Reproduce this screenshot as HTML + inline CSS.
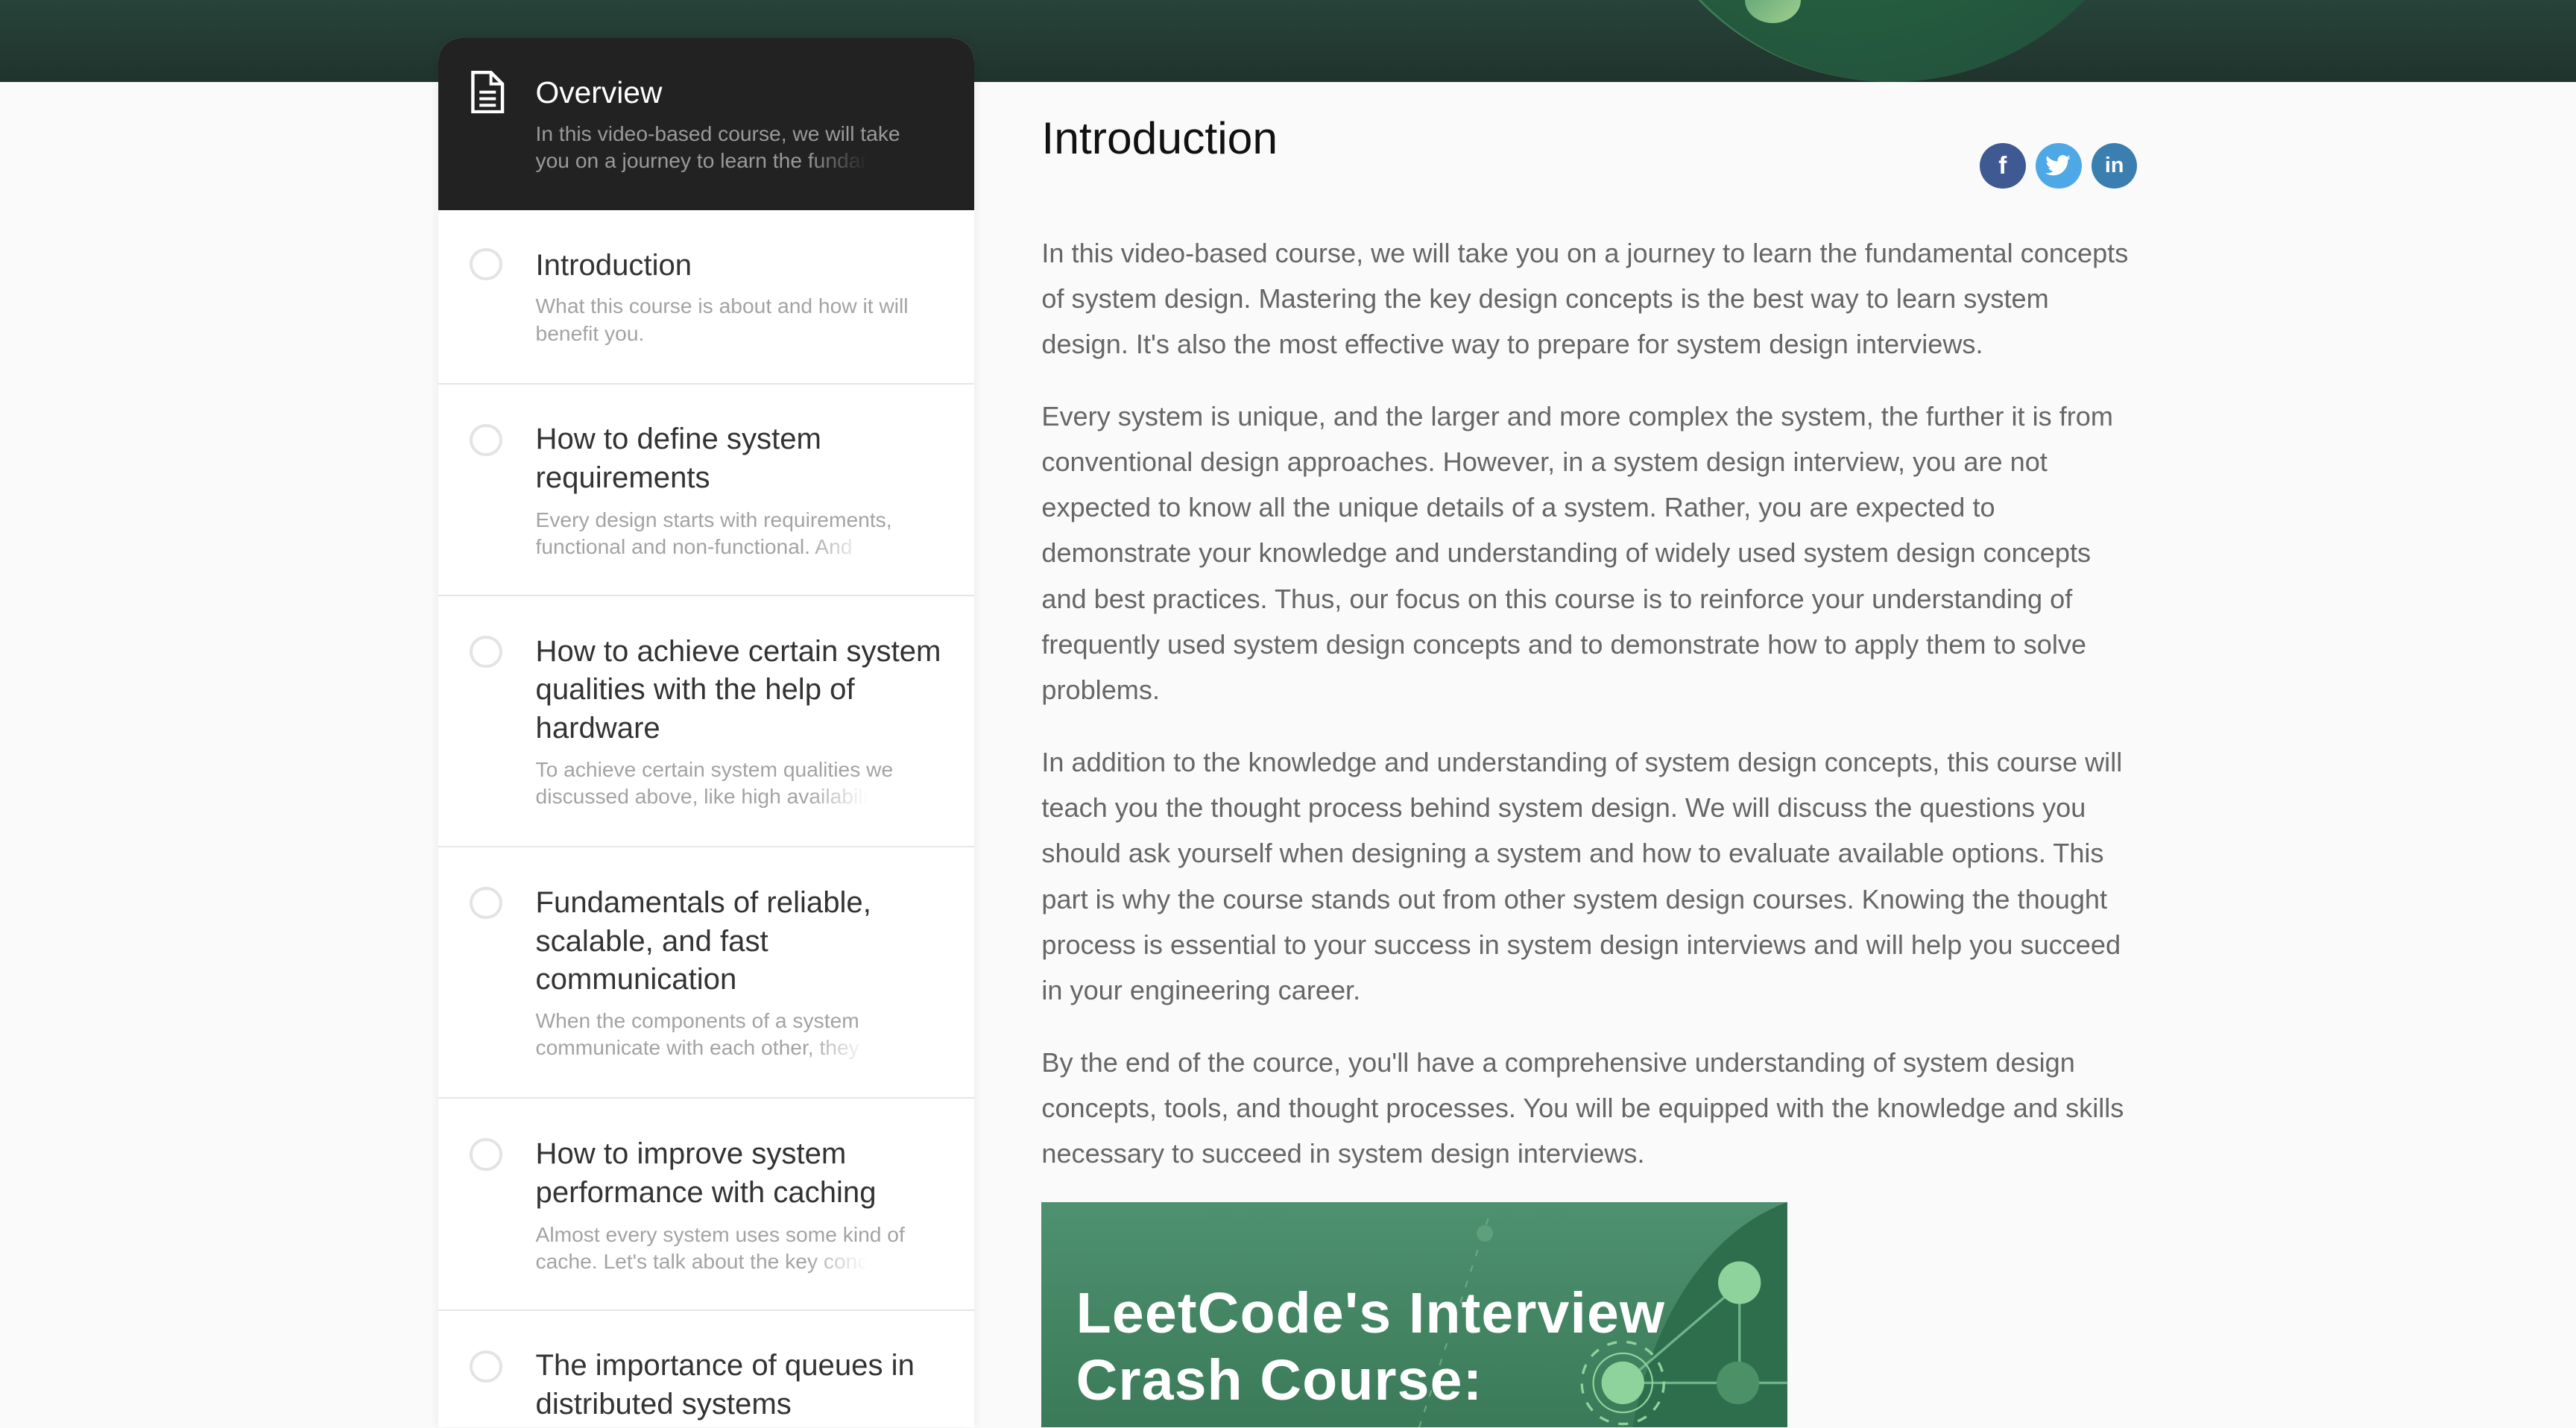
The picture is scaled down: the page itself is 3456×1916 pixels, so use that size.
<!DOCTYPE html>
<html><head><meta charset="utf-8"><style>
html{margin:0;padding:0;width:3456px;height:1916px;overflow:hidden}
body{margin:0;padding:0;width:1568px;height:869px;overflow:hidden;background:#fafafa;font-family:"Liberation Sans",Arial,sans-serif;zoom:2.20408;position:relative}
.hdr{position:absolute;left:0;top:0;width:1568px;height:50px;background:linear-gradient(180deg,#27433a,#20332c);overflow:hidden}
.hdr .arc{position:absolute;left:985px;top:-290px;width:330px;height:340px;border-radius:50%;background:radial-gradient(circle at 40% 40%,#2e6a47,#245a3e 60%,#22493a);border-left:3px solid #3f7d57}
.hdr .dot{position:absolute;left:1062px;top:-14px;width:34px;height:28px;border-radius:50%;background:linear-gradient(135deg,#5a9f72,#9fcf90)}
.side{position:absolute;left:267px;top:23px;width:326px;height:846px;background:#fff;border-radius:14px 14px 0 0;box-shadow:0 0 6px rgba(0,0,0,.08);overflow:hidden}
.ov{background:#222;height:105px;position:relative}
.ov .t{position:absolute;left:59px;top:23px;color:#fff;font-size:18.5px}
.ov .s{position:absolute;left:59px;top:50px;color:#9a9a9a;font-size:12.8px;line-height:16.5px;width:260px;white-space:nowrap}
.it{position:relative;border-bottom:1px solid #e6e6e6;box-sizing:border-box}
.it .c{position:absolute;left:19px;width:16px;height:16px;border:2px solid #e3e3e3;border-radius:50%}
.it .t{position:absolute;left:59px;color:#333;font-size:18.2px;line-height:23.5px;width:262px}
.it .s{position:absolute;left:59px;color:#a3a3a3;font-size:12.8px;line-height:16.5px;width:250px;white-space:nowrap}
.f{display:inline-block;width:202px;overflow:hidden;vertical-align:top;-webkit-mask-image:linear-gradient(90deg,#000 82%,transparent 100%);mask-image:linear-gradient(90deg,#000 82%,transparent 100%)}
h1{position:absolute;left:634px;top:68px;margin:0;font-size:27.5px;font-weight:normal;color:#111;white-space:nowrap}
.soc{position:absolute;top:87px;width:28px;height:28px;border-radius:50%;color:#fff;font-weight:bold;text-align:center;line-height:28px;font-size:15px}
.txt{position:absolute;left:634px;top:140px;width:700px;color:#666;font-size:16.4px;line-height:27.8px;white-space:nowrap}
.txt p{margin:0 0 16px 0}
.img{position:absolute;left:634px;top:732px;width:454px;height:137px;background:linear-gradient(180deg,#4e9170,#3a7a58);overflow:hidden}
.img .tx{position:absolute;left:21px;top:47px;color:#fff;font-weight:bold;font-size:35px;line-height:41px;letter-spacing:.5px;white-space:nowrap}
</style></head><body>
<div class="hdr"><div class="arc"></div><div class="dot"></div></div>

<div class="side">
 <div class="ov">
  <svg style="position:absolute;left:19px;top:20px" width="22" height="26" viewBox="0 0 22 26"><path d="M2 1h11l7 7v17H2z" fill="none" stroke="#fff" stroke-width="2"/><path d="M13 1v7h7M6 13h10M6 17h10M6 21h10" stroke="#fff" stroke-width="1.8" fill="none"/></svg>
  <div class="t">Overview</div>
  <div class="s">In this video-based course, we will take<br><span class="f">you on a journey to learn the fundamental</span></div>
 </div>
 <div class="it" style="height:106px"><div class="c" style="top:23px"></div><div class="t" style="top:22px">Introduction</div><div class="s" style="top:50px">What this course is about and how it will<br>benefit you.</div></div>
 <div class="it" style="height:129px"><div class="c" style="top:24px"></div><div class="t" style="top:22px">How to define system<br>requirements</div><div class="s" style="top:74px">Every design starts with requirements,<br><span class="f">functional and non-functional. And</span></div></div>
 <div class="it" style="height:153px"><div class="c" style="top:24px"></div><div class="t" style="top:22px">How to achieve certain system<br>qualities with the help of<br>hardware</div><div class="s" style="top:97px">To achieve certain system qualities we<br><span class="f">discussed above, like high availability</span></div></div>
 <div class="it" style="height:153px"><div class="c" style="top:24px"></div><div class="t" style="top:22px">Fundamentals of reliable,<br>scalable, and fast<br>communication</div><div class="s" style="top:97px">When the components of a system<br><span class="f">communicate with each other, they</span></div></div>
 <div class="it" style="height:129px"><div class="c" style="top:24px"></div><div class="t" style="top:22px">How to improve system<br>performance with caching</div><div class="s" style="top:74px">Almost every system uses some kind of<br><span class="f">cache. Let's talk about the key concepts</span></div></div>
 <div class="it" style="height:129px"><div class="c" style="top:24px"></div><div class="t" style="top:22px">The importance of queues in<br>distributed systems</div></div>
</div>

<h1>Introduction</h1>
<div class="soc" style="left:1205px;background:#3f5a92">f</div>
<div class="soc" style="left:1239px;background:#4ea8e6"><svg width="16" height="14" viewBox="0 0 24 20" style="margin-top:7px"><path d="M23 2.5a9 9 0 0 1-2.7.8A4.7 4.7 0 0 0 22.4.6a9.4 9.4 0 0 1-3 1.1A4.7 4.7 0 0 0 11.4 6 13.3 13.3 0 0 1 1.7 1.1a4.7 4.7 0 0 0 1.5 6.3 4.7 4.7 0 0 1-2.1-.6 4.7 4.7 0 0 0 3.8 4.6 4.7 4.7 0 0 1-2.1.1 4.7 4.7 0 0 0 4.4 3.3A9.4 9.4 0 0 1 0 16.7 13.3 13.3 0 0 0 7.2 18.8c8.6 0 13.4-7.2 13.4-13.4v-.6A9.5 9.5 0 0 0 23 2.5z" fill="#fff"/></svg></div>
<div class="soc" style="left:1273px;background:#3a7fb0;font-size:13px">in</div>

<div class="txt">
<p>In this video-based course, we will take you on a journey to learn the fundamental concepts<br>of system design. Mastering the key design concepts is the best way to learn system<br>design. It's also the most effective way to prepare for system design interviews.</p>
<p>Every system is unique, and the larger and more complex the system, the further it is from<br>conventional design approaches. However, in a system design interview, you are not<br>expected to know all the unique details of a system. Rather, you are expected to<br>demonstrate your knowledge and understanding of widely used system design concepts<br>and best practices. Thus, our focus on this course is to reinforce your understanding of<br>frequently used system design concepts and to demonstrate how to apply them to solve<br>problems.</p>
<p>In addition to the knowledge and understanding of system design concepts, this course will<br>teach you the thought process behind system design. We will discuss the questions you<br>should ask yourself when designing a system and how to evaluate available options. This<br>part is why the course stands out from other system design courses. Knowing the thought<br>process is essential to your success in system design interviews and will help you succeed<br>in your engineering career.</p>
<p>By the end of the cource, you'll have a comprehensive understanding of system design<br>concepts, tools, and thought processes. You will be equipped with the knowledge and skills<br>necessary to succeed in system design interviews.</p>
</div>

<div class="img">
 <svg style="position:absolute;left:0;top:0" width="454" height="137">
  <path d="M454 0 C400 20 370 80 360 137 L454 137Z" fill="#2f6e4c"/>
  <path d="M272 10 L230 137" stroke="#6aa884" stroke-dasharray="4 6" fill="none"/>
  <circle cx="270" cy="19" r="5" fill="#5f9f7c"/>
  <path d="M355 110 L425 50 M425 50 L425 110 M355 110 L454 110" stroke="#6fb58a" stroke-width="1.5" fill="none"/>
  <circle cx="425" cy="49" r="13" fill="#8fd39c"/>
  <circle cx="424" cy="110" r="13" fill="#4c9068"/>
  <circle cx="354" cy="110" r="13" fill="#8fd39c"/>
  <circle cx="354" cy="110" r="18" fill="none" stroke="#8fd39c" stroke-width="1"/>
  <circle cx="354" cy="110" r="25" fill="none" stroke="#8fd39c" stroke-width="1.5" stroke-dasharray="6 6"/>
 </svg>
 <div class="tx">LeetCode's Interview<br>Crash Course:</div>
</div>
</body></html>
